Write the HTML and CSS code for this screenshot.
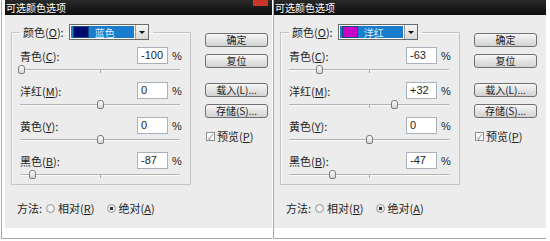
FILE: index.html
```html
<!DOCTYPE html>
<html lang="zh-CN">
<head>
    <meta charset="UTF-8">
    <meta name="viewport" content="width=device-width, initial-scale=1.0">
    <title>可选颜色选项</title>
    <link rel="stylesheet" href="styles.css">
</head>
<body>
    <div class="page">
        <!-- 蓝色 -->
        <div class="dialog">
            <div class="titlebar">
                <span class="title">可选颜色选项</span>
                <span class="close"></span>
            </div>
            <div class="body">
                <div class="main">
                    <fieldset class="group">
                        <legend>
                            <span class="label">颜色(<u>O</u>):</span>
                            <span class="select">
                                <span class="value"><span class="swatch blue"></span>蓝色</span>
                                <span class="arrow"></span>
                            </span>
                        </legend>
                        <div class="row">
                            <div class="head"><span class="label">青色(<u>C</u>):</span><span class="input">-100</span><span class="pct">%</span></div>
                            <div class="slider"><span class="tick"></span><span class="thumb" style="left: -2px"></span></div>
                        </div>
                        <div class="row">
                            <div class="head"><span class="label">洋红(<u>M</u>):</span><span class="input">0</span><span class="pct">%</span></div>
                            <div class="slider"><span class="tick"></span><span class="thumb" style="left: 76.5px"></span></div>
                        </div>
                        <div class="row">
                            <div class="head"><span class="label">黄色(<u>Y</u>):</span><span class="input">0</span><span class="pct">%</span></div>
                            <div class="slider"><span class="tick"></span><span class="thumb" style="left: 76.5px"></span></div>
                        </div>
                        <div class="row">
                            <div class="head"><span class="label">黑色(<u>B</u>):</span><span class="input">-87</span><span class="pct">%</span></div>
                            <div class="slider"><span class="tick"></span><span class="thumb" style="left: 8.6px"></span></div>
                        </div>
                    </fieldset>
                    <div class="buttons">
                        <button class="btn">确定</button>
                        <button class="btn">复位</button>
                        <button class="btn spaced">载入(L)...</button>
                        <button class="btn">存储(S)...</button>
                        <div class="check"><span class="box">&#10003;</span>预览(<u>P</u>)</div>
                    </div>
                </div>
                <div class="method">
                    <span>方法:</span>
                    <span class="radio"></span><span>相对(<u>R</u>)</span>
                    <span class="radio on"></span><span>绝对(<u>A</u>)</span>
                </div>
            </div>
        </div>

        <!-- 洋红 -->
        <div class="dialog">
            <div class="titlebar">
                <span class="title">可选颜色选项</span>
            </div>
            <div class="body">
                <div class="main">
                    <fieldset class="group">
                        <legend>
                            <span class="label">颜色(<u>O</u>):</span>
                            <span class="select">
                                <span class="value"><span class="swatch magenta"></span>洋红</span>
                                <span class="arrow"></span>
                            </span>
                        </legend>
                        <div class="row">
                            <div class="head"><span class="label">青色(<u>C</u>):</span><span class="input">-63</span><span class="pct">%</span></div>
                            <div class="slider"><span class="tick"></span><span class="thumb" style="left: 27.4px"></span></div>
                        </div>
                        <div class="row">
                            <div class="head"><span class="label">洋红(<u>M</u>):</span><span class="input">+32</span><span class="pct">%</span></div>
                            <div class="slider"><span class="tick"></span><span class="thumb" style="left: 101.5px"></span></div>
                        </div>
                        <div class="row">
                            <div class="head"><span class="label">黄色(<u>Y</u>):</span><span class="input">0</span><span class="pct">%</span></div>
                            <div class="slider"><span class="tick"></span><span class="thumb" style="left: 76.5px"></span></div>
                        </div>
                        <div class="row">
                            <div class="head"><span class="label">黑色(<u>B</u>):</span><span class="input">-47</span><span class="pct">%</span></div>
                            <div class="slider"><span class="tick"></span><span class="thumb" style="left: 39.8px"></span></div>
                        </div>
                    </fieldset>
                    <div class="buttons">
                        <button class="btn">确定</button>
                        <button class="btn">复位</button>
                        <button class="btn spaced">载入(L)...</button>
                        <button class="btn">存储(S)...</button>
                        <div class="check"><span class="box">&#10003;</span>预览(<u>P</u>)</div>
                    </div>
                </div>
                <div class="method">
                    <span>方法:</span>
                    <span class="radio"></span><span>相对(<u>R</u>)</span>
                    <span class="radio on"></span><span>绝对(<u>A</u>)</span>
                </div>
            </div>
        </div>
    </div>
</body>
</html>
```

FILE: styles.css
```css
body {
    margin: 0;
    background: #fff;
    font-family: "Noto Sans CJK SC", "Liberation Sans", sans-serif;
    font-size: 11px;
    color: #1e1e1e;
}
.page {
    display: flex;
    height: 241px;
    padding-left: 1px;
}
.dialog {
    width: 267px;
    height: 238px;
    padding-left: 3px;
    border-left: 1px solid #a8a8a8;
    border-bottom: 1px solid #a8a8a8;
}
.dialog + .dialog {
    width: 272px;
    margin-left: 1px;
    padding-left: 0;
}
.titlebar {
    display: flex;
    align-items: center;
    height: 15px;
    background: linear-gradient(#2a2a2a, #0c0c0c);
    color: #fff;
}
.titlebar .title {
    font-size: 10px;
    padding-left: 1px;
    flex: 1;
}
.titlebar .close {
    align-self: flex-start;
    width: 15px;
    height: 6px;
    margin-right: 4px;
    background: #c9352a;
}
.body {
    height: 213px;
    background: #ececec;
}
.main {
    display: flex;
    align-items: flex-start;
    padding: 9px 0 0 6px;
}
/* Colour group */
.group {
    width: 160px;
    margin: 0;
    padding: 7px 10px 3px 8px;
    border: 1px solid #c4c4c4;
    box-shadow: inset 1px 1px 0 #fafafa;
}
.group legend {
    display: flex;
    align-items: center;
    height: 16px;
    margin-left: 0;
    padding: 0 4px 0 3px;
}
.group legend .label {
    margin-right: 5px;
}
.select {
    display: flex;
    width: 80px;
    height: 16px;
    box-sizing: border-box;
    border: 1px solid #6b6b6b;
    background: #fff;
}
.select .value {
    display: flex;
    align-items: center;
    flex: 1;
    margin: 1px;
    background: #1a7ccc;
    color: #dff0ff;
    font-size: 10px;
}
.swatch {
    width: 14px;
    height: 10px;
    margin: 0 6px 0 2px;
    border: 1px solid #0d4a80;
}
.swatch.blue {
    background: #000a6e;
}
.swatch.magenta {
    background: #c800c8;
}
.select .arrow {
    display: flex;
    align-items: center;
    justify-content: center;
    width: 12px;
    border-left: 1px solid #9a9a9a;
    background: linear-gradient(#f4f4f4, #d8d8d8);
}
.select .arrow::before {
    content: "";
    border-left: 3px solid transparent;
    border-right: 3px solid transparent;
    border-top: 3px solid #111;
}
.row + .row {
    margin-top: 6px;
}
.head {
    display: flex;
    align-items: center;
    height: 17px;
}
.head .label {
    flex: 1;
}
.input {
    width: 31px;
    height: 17px;
    box-sizing: border-box;
    padding-left: 3px;
    border: 1px solid #a9b1bb;
    background: #fff;
    font-family: "Liberation Sans", sans-serif;
    font-size: 11px;
    line-height: 15px;
}
.pct {
    width: 12px;
    padding-left: 4px;
    box-sizing: border-box;
    font-family: "Liberation Sans", sans-serif;
    font-size: 11px;
}
.slider {
    position: relative;
    height: 12px;
}
.slider::before {
    content: "";
    display: block;
    position: relative;
    top: 5px;
    height: 1px;
    background: #b2b2b2;
    border-bottom: 1px solid #fbfbfb;
}
.slider .tick {
    position: absolute;
    left: 80px;
    top: 6px;
    width: 1px;
    height: 3px;
    background: #aaa;
}
.slider .thumb {
    position: absolute;
    top: 1px;
    width: 7px;
    height: 9px;
    box-sizing: border-box;
    border: 1px solid #7d7d7d;
    border-radius: 3px 3px 2px 2px;
    background: linear-gradient(#fdfdfd, #d6d6d6);
}
/* Buttons */
.buttons {
    display: flex;
    flex-direction: column;
    margin: 9px 0 0 14px;
}
.btn {
    width: 63px;
    height: 14px;
    padding: 0;
    margin-bottom: 7px;
    border: 1px solid #707070;
    border-radius: 3px;
    background: linear-gradient(#f7f7f7, #e4e4e4 50%, #d2d2d2);
    font-family: "Noto Sans CJK SC", "Liberation Sans", sans-serif;
    font-size: 10px;
    line-height: 12px;
    color: #222;
}
.btn.spaced {
    margin-top: 8px;
}
.check {
    display: flex;
    align-items: center;
    margin-top: 3px;
    padding-left: 1px;
}
.check .box {
    width: 9px;
    height: 9px;
    box-sizing: border-box;
    margin-right: 2px;
    border: 1px solid #8d8d8d;
    background: #fff;
    color: #666;
    font-size: 8px;
    line-height: 7px;
    text-align: center;
}
/* Method */
.method {
    display: flex;
    align-items: center;
    margin-top: 15px;
    padding-left: 12px;
}
.radio {
    width: 9px;
    height: 9px;
    box-sizing: border-box;
    margin: 0 3px 0 4px;
    border: 1px solid #9a9a9a;
    border-radius: 50%;
    background: radial-gradient(#fff, #d8d8d8);
}
.radio.on {
    margin-left: 12px;
    background: radial-gradient(#333 0 1.5px, #e8e8e8 2px);
}
```
